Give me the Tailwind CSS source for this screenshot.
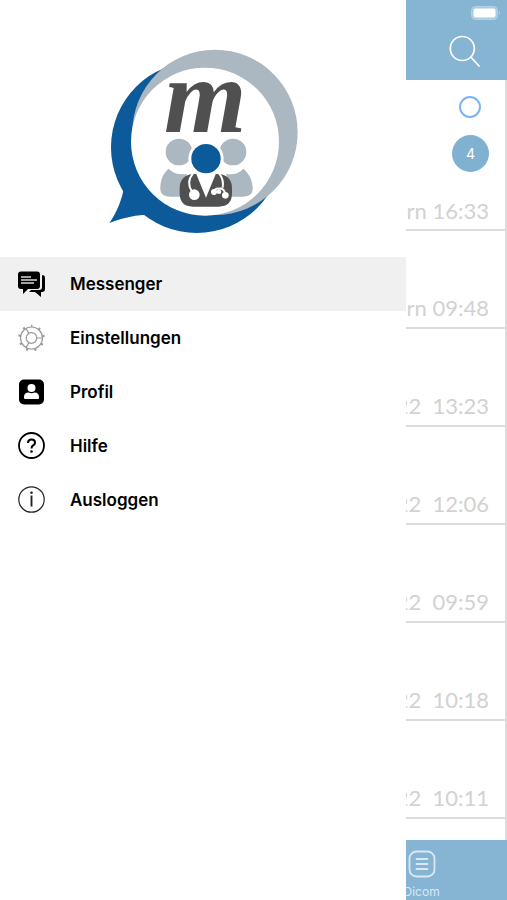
<!DOCTYPE html>
<html lang="de">
<head>
<meta charset="utf-8">
<meta name="viewport" content="width=device-width, initial-scale=1">
<title>Messenger</title>
<script src="https://cdn.jsdelivr.net/npm/@tailwindcss/browser@4"></script>
</head>
<body class="flex min-h-screen bg-white font-['Inter','Liberation_Sans',sans-serif] text-black">

<aside class="w-4/5 shrink-0 bg-white">
  <div class="flex justify-center pt-10 pb-[17px] pl-1">
    <svg class="h-[200px] w-[210px] overflow-visible" viewBox="0 0 630 600" role="img" aria-label="Logo">
      <path fill="#0d5a9b" d="M70 452C62 490 45 525 28 549C62 536 95 527 135 524L190 420Z"/>
      <circle cx="290" cy="322" r="257" fill="#0d5a9b"/>
      <circle cx="345" cy="277" r="248" fill="#abb7c1"/>
      <circle cx="315" cy="305" r="222" fill="#fff"/>
      <text x="192" y="277" font-family="Liberation Serif, serif" font-style="italic" font-weight="700" font-size="318" fill="#505051">m</text>
      <g fill="#abb7c1">
        <circle cx="237" cy="336" r="40"/>
        <circle cx="399" cy="336" r="40"/>
        <path d="M206 386C188 401 180 422 181 451Q184 470 212 470H260V402Q225 407 206 386Z"/>
        <path d="M430 386C448 401 459 422 458 451Q455 470 427 470H379V402Q411 407 430 386Z"/>
      </g>
      <path fill="#505051" d="M278 402Q239 407 239 445V460Q239 500 279 500H356Q396 500 396 460V445Q396 407 357 402Z"/>
      <path fill="#fff" d="M286 395L318 473L350 395Z"/>
      <circle cx="318" cy="356" r="53" fill="#fff"/>
      <circle cx="318" cy="356" r="44" fill="#0d5a9b"/>
      <g fill="none" stroke="#fff" stroke-width="6">
        <path d="M279 400C265 417 264 437 276 455"/>
        <path d="M357 400Q372 417 368 443M341 459Q345 444 356 446Q371 443 376 461"/>
      </g>
      <g fill="#fff"><circle cx="283" cy="464" r="16"/><circle cx="342" cy="456" r="9"/><circle cx="357" cy="455" r="7"/><circle cx="376" cy="466" r="10"/></g>
    </svg>
  </div>

  <nav aria-label="Hauptmenü" class="flex flex-col text-[17px] leading-6 font-semibold">
    <a href="#messenger" aria-current="page" class="flex h-[54px] items-center gap-6 bg-[#f0f0f0] px-4">
      <svg class="size-[30px]" viewBox="0 0 30 30" aria-hidden="true">
        <path d="M26 6Q29 6 29 9V20Q29 23 26 23H25V28L19 23H13L15 21H23Q26 21 26 18Z"/>
        <path d="M5 2.500H21Q24 2.500 24 5.500V17Q24 20 21 20H12L7 25V20H5Q2 20 2 17V5.500Q2 2.500 5 2.500Z"/>
        <path d="M5 8H15M5 11H21M5 14H18" fill="none" stroke="#d8d8d8" stroke-width="1.300"/>
      </svg>
      Messenger
    </a>
    <a href="#einstellungen" class="flex h-[54px] items-center gap-6 px-4">
      <svg class="size-[30px]" viewBox="0 0 30 30" fill="none" stroke="#9a9a9a" stroke-width="1.200" aria-hidden="true">
        <circle cx="15.500" cy="15" r="11"/>
        <circle cx="15.500" cy="15" r="5.300"/>
        <path d="M20.800 15H26.500M12.900 10.400L10 5.500M12.900 19.600L10 24.500"/>
        <circle cx="15.500" cy="15" r="12.200" stroke-width="2.200" stroke-dasharray="2 6.517" stroke-dashoffset="1" transform="rotate(-90 15.500 15)"/>
      </svg>
      Einstellungen
    </a>
    <a href="#profil" class="flex h-[54px] items-center gap-6 px-4">
      <svg class="size-[30px]" viewBox="0 0 30 30" aria-hidden="true">
        <rect x="3" y="2.500" width="25" height="25" rx="5"/>
        <circle cx="15.500" cy="11" r="4" fill="#fff"/>
        <path fill="#fff" d="M8 21V20Q8 15.500 12.500 15.500Q15.500 17 18.500 15.500Q23 15.500 23 20V21Q23 22 22 22H9Q8 22 8 21Z"/>
      </svg>
      Profil
    </a>
    <a href="#hilfe" class="flex h-[54px] items-center gap-6 px-4">
      <svg class="size-[30px]" viewBox="0 0 30 30" fill="none" stroke="#000" aria-hidden="true">
        <circle cx="15.500" cy="14.500" r="12.500" stroke-width="1.800"/>
        <path d="M12 12Q12 8.500 15.500 8.500Q19 8.500 19 11.700Q19 13.500 17 14.500Q15.500 15.300 15.500 17.500" stroke-width="2"/>
        <circle cx="15.500" cy="20.500" r="1.300" fill="#000" stroke="none"/>
      </svg>
      Hilfe
    </a>
    <a href="#ausloggen" class="flex h-[54px] items-center gap-6 px-4">
      <svg class="size-[30px]" viewBox="0 0 30 30" fill="none" stroke="#222" aria-hidden="true">
        <circle cx="15.500" cy="14.500" r="12.700" stroke-width="1.200"/>
        <path d="M15.500 10.500V21.500" stroke-width="1.900"/>
        <circle cx="15.500" cy="7.800" r="1.300" fill="#222" stroke="none"/>
      </svg>
      Ausloggen
    </a>
  </nav>
</aside>

<main class="flex min-w-0 flex-1 flex-col overflow-hidden">
  <header class="flex h-20 flex-col items-end gap-4 bg-[#86b4d3] pt-1.5">
    <svg class="mr-1.5 h-3.5 w-[30px] shrink-0" viewBox="0 0 30 14" aria-hidden="true">
      <rect x="0.500" y="0.500" width="26" height="13" rx="4" fill="#a9cae0" stroke="#b5d1e4"/>
      <rect x="2.500" y="2.500" width="22" height="9" rx="2" fill="#fff"/>
      <path d="M28 5Q30 7 28 9Z" fill="#b5d1e4"/>
    </svg>
    <button type="button" aria-label="Suchen" class="mr-[26px]">
      <svg class="size-8 overflow-visible" viewBox="0 0 32 32" fill="none" stroke="#fff" stroke-width="1.700" stroke-linecap="round">
        <circle cx="13.300" cy="12.500" r="12"/><path d="M21.800 21L30 30"/>
      </svg>
    </button>
  </header>

  <ul class="flex-1 border-r-2 border-[#dcdcdc] bg-white font-['Lato',sans-serif] text-[22px] leading-7 text-[#d2d2d2]">
    <li class="flex h-[151px] flex-col items-end justify-between border-b-2 border-[#dcdcdc] pt-4 pb-1">
      <span class="mr-6 size-[22px] rounded-full border-2 border-[#7db4f5]"></span>
      <span class="mr-4 mb-2 flex size-[37px] items-center justify-center rounded-full bg-[#80b1d1] font-['Inter',sans-serif] text-sm text-white">4</span>
      <span class="mr-4 whitespace-pre">rn 16:33</span>
    </li>
    <li class="flex h-[98px] items-end justify-end border-b-2 border-[#dcdcdc] pr-4 pb-[5px] whitespace-pre">rn 09:48</li>
    <li class="flex h-[98px] items-end justify-end border-b-2 border-[#dcdcdc] pr-4 pb-[5px] whitespace-pre">22  13:23</li>
    <li class="flex h-[98px] items-end justify-end border-b-2 border-[#dcdcdc] pr-4 pb-[5px] whitespace-pre">22  12:06</li>
    <li class="flex h-[98px] items-end justify-end border-b-2 border-[#dcdcdc] pr-4 pb-[5px] whitespace-pre">22  09:59</li>
    <li class="flex h-[98px] items-end justify-end border-b-2 border-[#dcdcdc] pr-4 pb-[5px] whitespace-pre">22  10:18</li>
    <li class="flex h-[98px] items-end justify-end border-b-2 border-[#dcdcdc] pr-4 pb-[5px] whitespace-pre">22  10:11</li>
  </ul>

  <footer class="h-[60px] overflow-hidden bg-[#86b4d3] pt-2.5 text-[#d9e8f3]">
    <a href="#dicom" class="flex w-8 flex-col items-center gap-1 text-xs leading-5">
      <svg class="size-7 shrink-0" viewBox="0 0 28 28" fill="none" stroke="#d9e8f3" stroke-width="1.800" stroke-linecap="round" aria-hidden="true">
        <rect x="1.500" y="1.500" width="25" height="25" rx="7"/>
        <path d="M8.500 9H19.500M8.500 14H19.500M8.500 19H19.500"/>
      </svg>
      <span>Dicom</span>
    </a>
  </footer>
</main>
</body>
</html>
